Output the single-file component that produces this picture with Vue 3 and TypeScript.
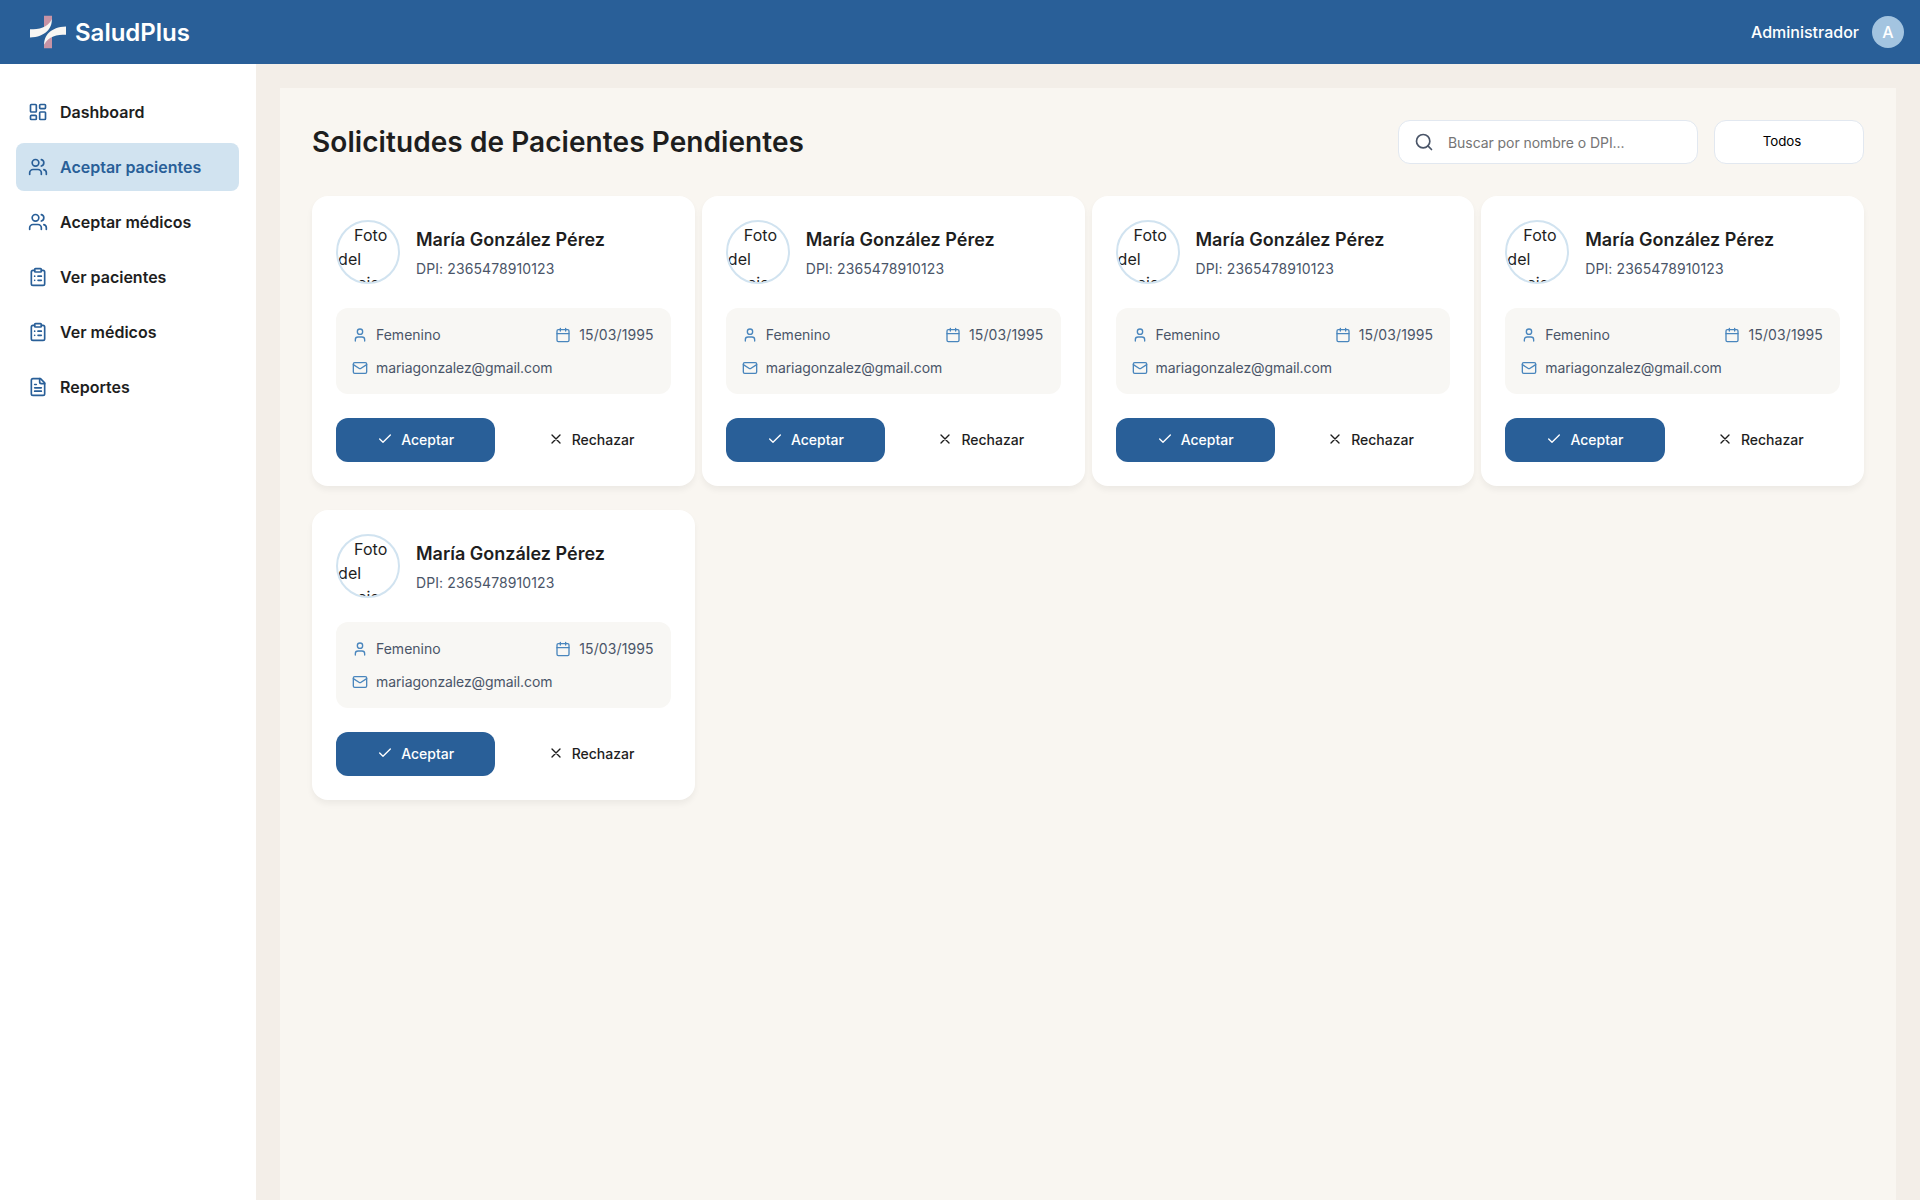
<script setup lang="ts">
import { ref } from 'vue'

interface NavItem {
  label: string
  icon: 'dashboard' | 'users' | 'clipboard' | 'file'
  active?: boolean
}

interface Patient {
  id: number
  name: string
  dpi: string
  gender: string
  birth: string
  email: string
}

const navItems: NavItem[] = [
  { label: 'Dashboard', icon: 'dashboard' },
  { label: 'Aceptar pacientes', icon: 'users', active: true },
  { label: 'Aceptar médicos', icon: 'users' },
  { label: 'Ver pacientes', icon: 'clipboard' },
  { label: 'Ver médicos', icon: 'clipboard' },
  { label: 'Reportes', icon: 'file' },
]

const search = ref('')

const patients: Patient[] = Array.from({ length: 5 }, (_, i) => ({
  id: i + 1,
  name: 'María González Pérez',
  dpi: '2365478910123',
  gender: 'Femenino',
  birth: '15/03/1995',
  email: 'mariagonzalez@gmail.com',
}))
</script>

<template>
  <div class="app">
    <header class="topbar">
      <div class="brand">
        <svg class="logo" viewBox="0 0 36 34" width="36" height="34">
          <path d="M14 0.700H22V4.500C20.500 8.500 18 11.500 14 13Z" fill="#c793a5" />
          <path d="M22 33.300H14V29.500C15.500 25.500 18 22.500 22 21Z" fill="#c793a5" />
          <path d="M0 14.200C9 14.200 17.500 13 21.800 4.200C22.300 13 15.500 22 0 22.500Z" fill="#f8f6f3" />
          <path d="M36 19.800C27 19.800 18.500 21 14.200 29.800C13.700 21 20.500 12 36 11.500Z" fill="#f8f6f3" />
        </svg>
        <span class="brand-name">SaludPlus</span>
      </div>
      <div class="user">
        <span>Administrador</span>
        <span class="user-badge">A</span>
      </div>
    </header>

    <div class="body">
      <nav class="sidebar">
        <a v-for="item in navItems" :key="item.label" class="nav-item" :class="{ active: item.active }">
          <svg class="icon" viewBox="0 0 24 24" width="20" height="20">
            <template v-if="item.icon === 'dashboard'">
              <rect x="3" y="3" width="7" height="9" rx="1" />
              <rect x="14" y="3" width="7" height="5" rx="1" />
              <rect x="14" y="12" width="7" height="9" rx="1" />
              <rect x="3" y="16" width="7" height="5" rx="1" />
            </template>
            <template v-else-if="item.icon === 'users'">
              <path d="M16 21v-2a4 4 0 0 0-4-4H6a4 4 0 0 0-4 4v2" />
              <circle cx="9" cy="7" r="4" />
              <path d="M22 21v-2a4 4 0 0 0-3-3.870" />
              <path d="M16 3.130a4 4 0 0 1 0 7.750" />
            </template>
            <template v-else-if="item.icon === 'clipboard'">
              <rect x="8" y="2" width="8" height="4" rx="1" />
              <path d="M16 4h2a2 2 0 0 1 2 2v14a2 2 0 0 1-2 2H6a2 2 0 0 1-2-2V6a2 2 0 0 1 2-2h2" />
              <path d="M12 11h4M12 16h4M8 11h.01M8 16h.01" />
            </template>
            <template v-else>
              <path d="M15 2H6a2 2 0 0 0-2 2v16a2 2 0 0 0 2 2h12a2 2 0 0 0 2-2V7Z" />
              <path d="M14 2v4a2 2 0 0 0 2 2h4M10 9H8M16 13H8M16 17H8" />
            </template>
          </svg>
          <span>{{ item.label }}</span>
        </a>
      </nav>

      <main class="main">
        <section class="panel">
          <div class="panel-head">
            <h1>Solicitudes de Pacientes Pendientes</h1>
            <div class="filters">
              <label class="search">
                <svg class="icon" viewBox="0 0 24 24" width="20" height="20">
                  <circle cx="11" cy="11" r="8" />
                  <path d="m21 21-4.300-4.300" />
                </svg>
                <input v-model="search" type="text" placeholder="Buscar por nombre o DPI..." />
              </label>
              <button class="select" type="button">Todos</button>
            </div>
          </div>

          <div class="grid">
            <article v-for="p in patients" :key="p.id" class="card">
              <div class="card-head">
                <div class="photo"><span>Foto del paciente</span></div>
                <div class="identity">
                  <h2>{{ p.name }}</h2>
                  <p>DPI: {{ p.dpi }}</p>
                </div>
              </div>
              <div class="info">
                <div class="info-row">
                  <span class="info-item">
                    <svg class="icon" viewBox="0 0 24 24" width="16" height="16">
                      <path d="M19 21v-2a4 4 0 0 0-4-4H9a4 4 0 0 0-4 4v2" />
                      <circle cx="12" cy="7" r="4" />
                    </svg>
                    {{ p.gender }}
                  </span>
                  <span class="info-item birth">
                    <svg class="icon" viewBox="0 0 24 24" width="16" height="16">
                      <rect x="3" y="4" width="18" height="18" rx="2" />
                      <path d="M8 2v4M16 2v4M3 10h18" />
                    </svg>
                    {{ p.birth }}
                  </span>
                </div>
                <div class="info-row">
                  <span class="info-item email">
                    <svg class="icon" viewBox="0 0 24 24" width="16" height="16">
                      <rect x="2" y="4" width="20" height="16" rx="2" />
                      <path d="m22 7-8.970 5.700a1.940 1.940 0 0 1-2.060 0L2 7" />
                    </svg>
                    {{ p.email }}
                  </span>
                </div>
              </div>
              <div class="actions">
                <button class="btn primary" type="button">
                  <svg class="icon" viewBox="0 0 24 24" width="16" height="16"><path d="M20 6 9 17l-5-5" /></svg>
                  <span>Aceptar</span>
                </button>
                <button class="btn" type="button">
                  <svg class="icon" viewBox="0 0 24 24" width="16" height="16"><path d="M18 6 6 18M6 6l12 12" /></svg>
                  <span>Rechazar</span>
                </button>
              </div>
            </article>
          </div>
        </section>
      </main>
    </div>
  </div>
</template>

<style>
body {
  margin: 0;
  overflow: hidden;
}
</style>

<style scoped>
* {
  box-sizing: border-box;
}

.app {
  display: flex;
  flex-direction: column;
  height: 100vh;
  font-family: Inter, 'Liberation Sans', sans-serif;
  font-size: 16px;
  line-height: 24px;
  color: #1e1e1e;
  background: #f3eee8;
}

.icon {
  flex: none;
  fill: none;
  stroke: currentColor;
  stroke-width: 2;
  stroke-linecap: round;
  stroke-linejoin: round;
}

.topbar {
  flex: none;
  display: flex;
  align-items: center;
  justify-content: space-between;
  height: 64px;
  padding: 0 16px 0 30px;
  color: #fff;
  background: #295f98;
}

.brand {
  display: flex;
  align-items: center;
  gap: 9px;
}

.brand-name {
  padding-top: 2px;
  font-size: 24px;
  font-weight: 600;
  line-height: 32px;
}

.user {
  display: flex;
  align-items: center;
  gap: 13px;
  font-weight: 500;
}

.user-badge {
  display: flex;
  align-items: center;
  justify-content: center;
  width: 32px;
  height: 32px;
  border-radius: 50%;
  background: #a3c4e0;
}

.body {
  flex: 1;
  display: flex;
  min-height: 0;
}

.sidebar {
  flex: none;
  display: flex;
  flex-direction: column;
  gap: 7px;
  width: 256px;
  padding: 24px 17px 24px 16px;
  background: #fff;
}

.nav-item {
  display: flex;
  align-items: center;
  gap: 12px;
  height: 48px;
  padding: 0 12px;
  border-radius: 8px;
  font-weight: 600;
}

.nav-item .icon {
  color: #295f98;
}

.nav-item.active {
  color: #295f98;
  background: #d1e3f0;
}

.main {
  flex: 1;
  min-width: 0;
  padding: 24px 24px 0;
}

.panel {
  height: 100%;
  padding: 32px;
  background: #f9f6f1;
}

.panel-head {
  display: flex;
  align-items: center;
  justify-content: space-between;
  margin-bottom: 32px;
}

h1 {
  margin: 0;
  font-size: 28px;
  font-weight: 600;
  line-height: 42px;
  letter-spacing: 0.07px;
}

.filters {
  display: flex;
  gap: 16px;
}

.search {
  display: flex;
  align-items: center;
  gap: 14px;
  width: 300px;
  height: 44px;
  padding: 0 15px;
  border: 1px solid #e2e8f0;
  border-radius: 12px;
  color: #4a5568;
  background: #fff;
}

.search input {
  flex: 1;
  min-width: 0;
  padding: 2px 0 0;
  border: 0;
  outline: 0;
  font: 400 14px/20px Inter, sans-serif;
  letter-spacing: -0.06px;
  background: none;
}

.search input::placeholder {
  color: #757575;
}

.select {
  width: 150px;
  padding: 0 14px 2px 0;
  border: 1px solid #e2e8f0;
  border-radius: 12px;
  font: 400 13.333px/16px Inter, sans-serif;
  color: #000;
  background: #fff;
}

.grid {
  display: grid;
  grid-template-columns: repeat(4, 1fr);
  gap: 24px 7px;
}

.card {
  display: flex;
  flex-direction: column;
  gap: 24px;
  padding: 24px;
  border-radius: 16px;
  background: #fff;
  box-shadow: 0 4px 6px rgba(0, 0, 0, 0.05);
}

.card-head {
  display: flex;
  align-items: center;
  gap: 16px;
}

.photo {
  flex: none;
  width: 64px;
  height: 64px;
  padding-top: 1px;
  border: 2px solid #d1e3f0;
  border-radius: 50%;
  overflow: hidden;
  text-indent: 16px;
  letter-spacing: 0.1px;
}

.identity h2 {
  margin: 0 0 5px;
  font-size: 18px;
  font-weight: 600;
  line-height: 27px;
}

.identity p {
  margin: 0 0 -1px;
  font-size: 14px;
  line-height: 21px;
  letter-spacing: 0.1px;
  color: #4a5568;
}

.info {
  display: flex;
  flex-direction: column;
  gap: 12px;
  padding: 16px;
  border-radius: 12px;
  font-size: 14px;
  line-height: 21px;
  color: #4a5568;
  background: #f8f7f4;
}

.info-row {
  display: flex;
  justify-content: space-between;
}

.info-item {
  display: flex;
  align-items: center;
  gap: 8px;
}

.info-item.birth {
  padding-right: 1px;
  letter-spacing: 0.12px;
}

.info-item.email {
  letter-spacing: -0.09px;
}

.info-item .icon {
  color: #4a86bd;
}

.actions {
  display: flex;
  gap: 16px;
}

.btn {
  flex: 1;
  display: flex;
  align-items: center;
  justify-content: center;
  gap: 8px;
  height: 44px;
  padding: 0;
  border: 0;
  border-radius: 12px;
  font: 500 14px/21px Inter, sans-serif;
  color: #1e1e1e;
  background: #fff;
}

.btn span {
  padding-bottom: 2px;
}

.btn .icon {
  margin-bottom: 2px;
}

.btn.primary {
  color: #fff;
  background: #295f98;
}
</style>
